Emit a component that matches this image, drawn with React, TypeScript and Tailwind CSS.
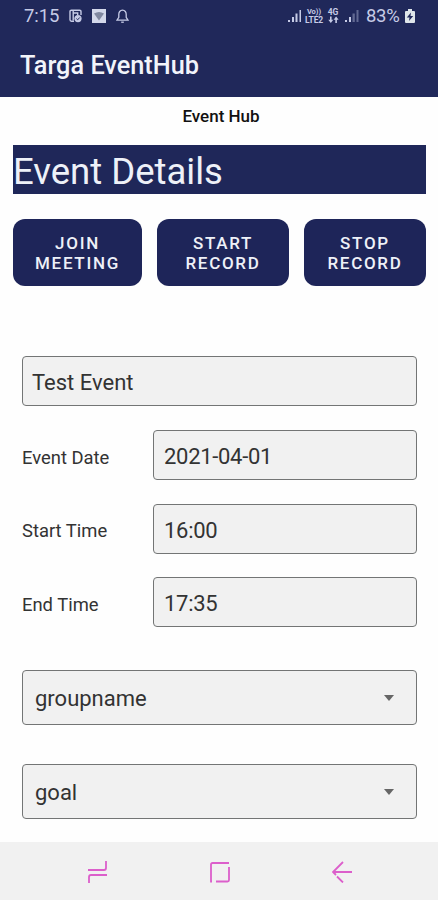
interface FieldProps {
  label: string;
  value: string;
}

const fields: FieldProps[] = [
  { label: 'Event Date', value: '2021-04-01' },
  { label: 'Start Time', value: '16:00' },
  { label: 'End Time', value: '17:35' },
];

function StatusBar() {
  return (
    <div className="flex h-8 items-center justify-between pl-6 pr-[23px] text-[#c6cbe6]">
      <div className="flex items-center">
        <span className="w-[45px] text-[18.5px] leading-8 tracking-[-0.1px]">7:15</span>
        {/* Scheduled document */}
        <svg width="13" height="14" viewBox="0 0 13 14" fill="none" stroke="currentColor" strokeWidth="1.4">
          <path d="M12 6V2.6Q12 1.2 10.6 1.2H2.4Q1 1.2 1 2.6v8.2Q1 12.2 2.4 12.2H5" />
          <path d="M4.2 1.5v10M4.2 4h4.5v2" />
          <circle cx="9" cy="9.6" r="3.6" fill="currentColor" stroke="none" />
          <path d="m7.4 9.6 1.3 1.2 2-2.3" stroke="#20285a" strokeWidth="1" />
        </svg>
        <svg className="ml-[10px]" width="14" height="14" viewBox="0 0 14 14">
          <rect width="14" height="14" fill="#d3d8ea" />
          <path d="M2 4.5Q7 1.5 12 4.5L7 11.5Z" fill="#8088a0" />
        </svg>
        {/* Bell */}
        <svg className="ml-[10px]" width="13" height="15" viewBox="0 0 13 15" fill="none" stroke="currentColor" strokeWidth="1.3">
          <path d="M6.5 1.2C4 1.2 2.8 3.2 2.8 5.4v3L1 11.2h11L10.2 8.4v-3C10.2 3.2 9 1.2 6.5 1.2Z" />
          <path d="M5.2 13.2h2.6" />
        </svg>
      </div>
      <div className="flex items-center">
        <svg width="14" height="14" viewBox="0 0 14 14" fill="currentColor">
          <path d="M0 11h2v2H0zM4 8h2v5H4zM7.5 4.5h2V13h-2zM11.5 1h1.5v12h-1.5z" />
        </svg>
        <div className="ml-[2px] flex w-[20px] flex-col items-center font-bold">
          <span className="text-[7.5px] leading-[9px]">Vo))</span>
          <span className="text-[8.5px] leading-[9px] tracking-[-0.2px]">LTE2</span>
        </div>
        <div className="ml-[3px] flex w-[12px] flex-col items-center text-[8.5px] font-bold leading-[8px]">
          <span>4G</span>
          <svg width="11" height="8" viewBox="0 0 11 8" fill="currentColor">
            <path d="M2 .5h1.6v3.2h1.7L2.8 7 .3 3.7H2zM7.3 7h1.6V3.8h1.7L8.1.5 5.6 3.8h1.7z" />
          </svg>
        </div>
        <svg className="ml-[6px]" width="14" height="14" viewBox="0 0 14 14" fill="currentColor">
          <path d="M0 11h2v2H0zM4 8h2v5H4z" />
          <path d="M7.5 4.5h2.3V13H7.5zM11.5 1h2v12h-2z" opacity=".4" />
        </svg>
        <span className="ml-[7px] w-[34px] whitespace-nowrap text-[18.5px] leading-8 tracking-[-0.3px]">83%</span>
        {/* Charging battery */}
        <svg className="ml-[5px]" width="10" height="14" viewBox="0 0 10 14">
          <path d="M3 0h4v2h2q1 0 1 1v10q0 1-1 1H1q-1 0-1-1V3q0-1 1-1h2z" fill="#dfe6ea" />
          <path d="M6 3.5 1.8 8.5h2.7L4 12l4.2-5H5.5z" fill="#20285a" />
        </svg>
      </div>
    </div>
  );
}

function ActionButton({ top, bottom, className }: { top: string; bottom: string; className: string }) {
  return (
    <button
      className={`h-[67px] rounded-xl bg-[#1e2559] text-center text-[17px] font-medium leading-5 tracking-[1.7px] text-[#eef1f8] ${className}`}
    >
      <span className="block">{top}</span>
      <span className="block">{bottom}</span>
    </button>
  );
}

function Field({ label, value }: FieldProps) {
  return (
    <div className="flex h-[50px] items-center">
      <label className="w-[131px] pt-[5px] text-[18.4px] text-[#333]">{label}</label>
      <div className="flex h-full flex-1 items-center rounded-[4px] border border-[#737575] bg-[#f1f1f1] px-[10px] pt-[3px] text-[22px] tracking-[-0.3px] text-[#333]">
        {value}
      </div>
    </div>
  );
}

function Select({ value }: { value: string }) {
  return (
    <div className="flex h-[55px] items-center justify-between rounded-[4px] border border-[#737575] bg-[#f1f1f1] pl-3 pr-[22px] text-[22px] text-[#333]">
      <span className="pt-[2px]">{value}</span>
      <svg width="10" height="6" viewBox="0 0 10 6" fill="#666">
        <path d="M0 0h10L5 6z" />
      </svg>
    </div>
  );
}

function NavBar() {
  return (
    <nav className="flex h-[58px] items-center justify-between bg-[#f1f1f1] pl-[87px] pr-[85px] pt-px text-[#dc5fcb]">
      <svg width="21" height="22" viewBox="0 0 21 22" fill="none" stroke="currentColor" strokeWidth="1.8">
        <path d="M1 9h16q2 0 2-2V0M20 14H4q-2 0-2 2v6" />
      </svg>
      <svg width="22" height="22" viewBox="0 0 22 22" fill="none" stroke="currentColor" strokeWidth="1.8">
        <path d="M3 20.5H2V3.5Q2 2 3.5 2H20M7 20.5H18.5Q20 20.5 20 19V6" />
      </svg>
      <svg width="21" height="22" viewBox="0 0 21 22" fill="none" stroke="currentColor" strokeWidth="1.8">
        <path d="M20 11H1M11 1 1 11l3 3M5 15.5l6 6" />
      </svg>
    </nav>
  );
}

export default function App() {
  return (
    <div className="flex h-[900px] w-[438px] flex-col overflow-hidden bg-[#fefefe] font-['Roboto',sans-serif]">
      <header className="h-[97px] bg-[#20285a]">
        <StatusBar />
        <h1 className="pl-5 pt-[18px] text-[25.3px] font-medium leading-8 text-[#f2f4fa]">Targa EventHub</h1>
      </header>

      <main className="flex-1 pl-[13px] pr-3">
        <p className="pl-[3px] pt-[9px] text-center text-[17px] font-medium leading-5 text-[#111]">Event Hub</p>
        <h2 className="mt-[19px] h-[49px] bg-[#1f2759] text-[36.5px] leading-[53px] text-[#eef1f8]">Event Details</h2>

        <div className="mt-[25px] flex justify-between">
          <ActionButton top="JOIN" bottom="MEETING" className="w-[129px]" />
          <ActionButton top="START" bottom="RECORD" className="w-[132px]" />
          <ActionButton top="STOP" bottom="RECORD" className="w-[122px]" />
        </div>

        <div className="mx-[9px] mt-[70px]">
          <div className="flex h-[50px] items-center rounded-[4px] border border-[#737575] bg-[#f1f1f1] px-[9px] pt-[3px] text-[22px] text-[#333]">
            Test Event
          </div>
          <div className="mt-6 flex flex-col gap-[23.5px]">
            {fields.map((field) => (
              <Field key={field.label} label={field.label} value={field.value} />
            ))}
          </div>
          <div className="mt-[43px] flex flex-col gap-[39px]">
            <Select value="groupname" />
            <Select value="goal" />
          </div>
        </div>
      </main>

      <NavBar />
    </div>
  );
}
